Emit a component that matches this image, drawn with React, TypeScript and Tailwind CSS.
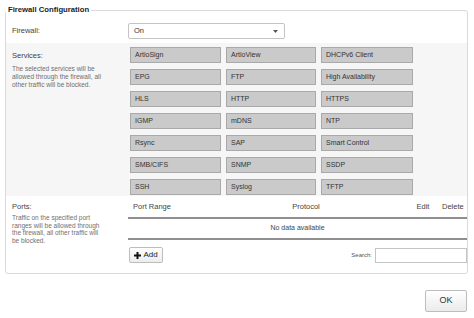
import React from "react";

const services = [
  "ArtioSign",
  "ArtioView",
  "DHCPv6 Client",
  "EPG",
  "FTP",
  "High Availability",
  "HLS",
  "HTTP",
  "HTTPS",
  "IGMP",
  "mDNS",
  "NTP",
  "Rsync",
  "SAP",
  "Smart Control",
  "SMB/CIFS",
  "SNMP",
  "SSDP",
  "SSH",
  "Syslog",
  "TFTP",
];

function Caret() {
  return (
    <svg width="5" height="3" viewBox="0 0 5 3" className="mr-[6px]">
      <path d="M0 0 L5 0 L2.5 3 Z" fill="#555" />
    </svg>
  );
}

function Plus() {
  return (
    <svg width="7" height="7" viewBox="0 0 7 7">
      <path d="M2.5 0h2v2.5H7v2H4.5V7h-2V4.5H0v-2h2.5z" fill="#111" />
    </svg>
  );
}

export default function App() {
  return (
    <div className="relative h-[318px] w-[474px] overflow-hidden bg-white font-['Liberation_Sans',Arial,sans-serif] text-[#333]">
      <fieldset className="ml-[5px] mt-[5px] w-[463px] rounded-[3px] border border-[#dadada]">
        <legend className="ml-[0px] px-[2px] text-[7.7px] font-bold leading-[10px] text-[#222]">
          Firewall Configuration
        </legend>

        {/* firewall on/off */}
        <div className="flex items-center pb-[4px] pt-[8px]">
          <div className="w-[122px] pl-[6px] text-[7.5px] leading-[10px] text-[#444]">
            Firewall:
          </div>
          <div className="flex h-[16px] w-[157px] items-center justify-between rounded-[2px] border border-[#c4c4c4] bg-white">
            <span className="pl-[5px] text-[7.5px] text-[#333]">On</span>
            <Caret />
          </div>
        </div>

        {/* services */}
        <div className="flex bg-[#f6f6f6] pb-[1px] pt-[4px]">
          <div className="w-[122px] pl-[6px] pt-[4px]">
            <div className="text-[7.5px] leading-[10px] text-[#444]">Services:</div>
            <div className="mt-[4px] whitespace-nowrap text-[6.5px] leading-[7.8px] text-[#6f6f6f]">
              The selected services will be
              <br />
              allowed through the firewall, all
              <br />
              other traffic will be blocked.
            </div>
          </div>
          <div className="grid grid-cols-[91px_90px_92px] gap-x-[5px] gap-y-[6px] pl-[2px]">
            {services.map((s) => (
              <div
                key={s}
                className="flex h-[16px] items-center border border-[#a9a9a9] bg-[#cacaca] pl-[4px] text-[7px] text-[#333]"
              >
                {s}
              </div>
            ))}
          </div>
        </div>

        {/* ports */}
        <div className="flex pb-[10px]">
          <div className="w-[122px] pl-[6px] pt-[6px]">
            <div className="text-[7.5px] leading-[10px] text-[#444]">Ports:</div>
            <div className="mt-[2px] whitespace-nowrap text-[6.5px] leading-[7.6px] text-[#6f6f6f]">
              Traffic on the specified port
              <br />
              ranges will be allowed through
              <br />
              the firewall, all other traffic will
              <br />
              be blocked.
            </div>
          </div>
          <div className="w-[339px]">
            <div className="flex h-[23px] items-center border-b-2 border-[#8f8f8f] text-[7.5px] text-[#444]">
              <div className="w-[120px] pl-[5px]">Port Range</div>
              <div className="w-[116px] text-center">Protocol</div>
              <div className="flex-1" />
              <div className="w-[24px] text-center">Edit</div>
              <div className="w-[32px] pl-[7px]">Delete</div>
            </div>
            <div className="flex h-[21px] items-center justify-center border-b-2 border-[#8f8f8f] text-[7px] text-[#444]">
              No data available
            </div>
            <div className="mt-[7px] flex items-center justify-between">
              <div className="ml-[1px] flex h-[16px] w-[34px] items-center justify-center gap-[2px] rounded-[2px] border border-[#bdbdbd] bg-gradient-to-b from-white to-[#ececec] text-[8px] text-[#222]">
                <Plus />
                <span>Add</span>
              </div>
              <div className="flex items-center">
                <span className="mr-[3px] text-[6px] text-[#555]">Search:</span>
                <div className="h-[15px] w-[92px] border border-[#c4c4c4] bg-white" />
              </div>
            </div>
          </div>
        </div>
      </fieldset>

      <div className="mr-[7px] mt-[16px] flex justify-end">
        <div className="flex h-[22px] w-[42px] items-center justify-center rounded-[2px] border border-[#bdbdbd] bg-gradient-to-b from-white to-[#ebebeb] text-[9px] text-[#333]">
          OK
        </div>
      </div>
    </div>
  );
}
